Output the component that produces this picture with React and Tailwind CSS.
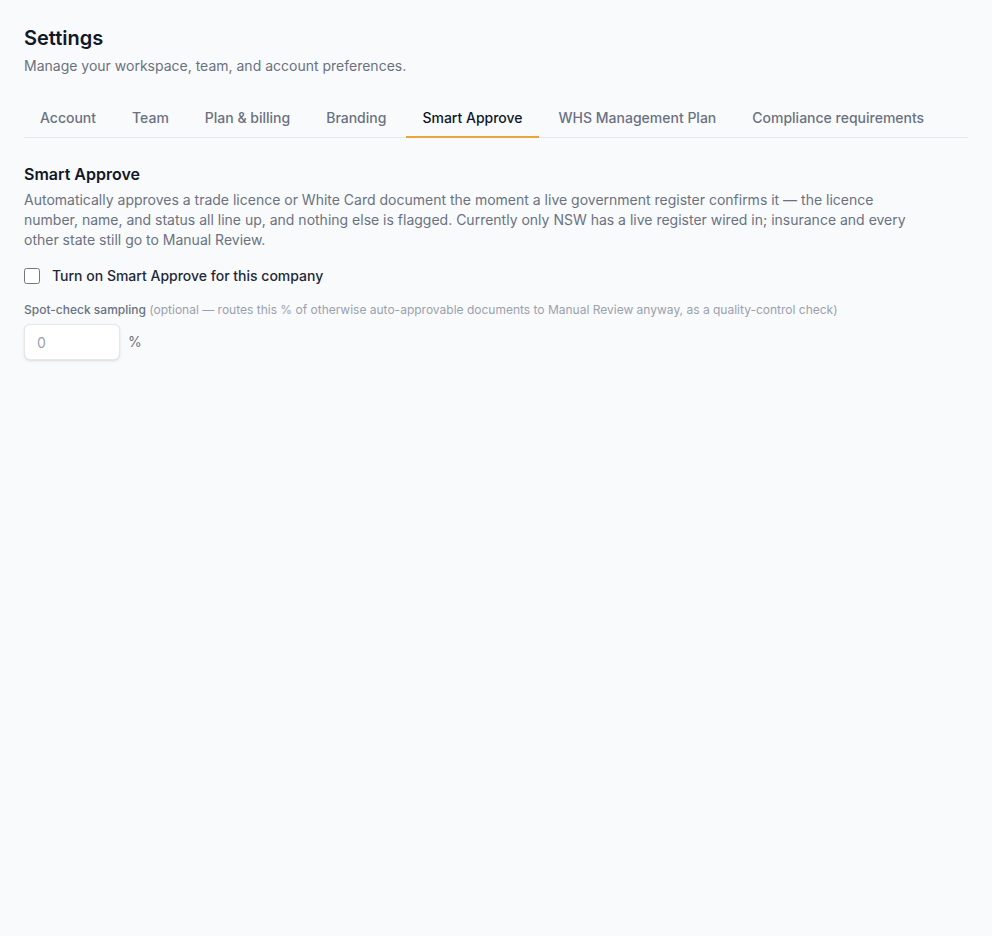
import React, { useState } from 'react'

const tabs = ['Account', 'Team', 'Plan & billing', 'Branding', 'Smart Approve', 'WHS Management Plan', 'Compliance requirements']

const App = () => {
    const [active, setActive] = useState('Smart Approve')
    const [enabled, setEnabled] = useState(false)

    return (
        <div className="min-h-screen bg-gray-50 px-6 pt-6 font-['Inter',sans-serif] text-gray-900">
            <h1 className="text-xl font-semibold leading-7">Settings</h1>
            <p className="mt-1 text-sm text-gray-500">Manage your workspace, team, and account preferences.</p>

            <div className="mt-6 flex gap-1 border-b border-gray-200">
                {tabs.map((t) => (
                    <button
                        key={t}
                        onClick={() => setActive(t)}
                        className={
                            t === active
                                ? '-mb-px border-b-2 border-[#eaa53e] px-4 py-2 text-sm font-medium text-gray-900'
                                : '-mb-px border-b-2 border-transparent px-4 py-2 text-sm font-medium text-gray-500 hover:text-gray-700'
                        }
                    >
                        {t}
                    </button>
                ))}
            </div>

            <div className="mt-6">
                <h2 className="text-base font-semibold leading-6">Smart Approve</h2>
                <p className="mt-1 max-w-4xl text-sm leading-5 text-gray-500">
                    Automatically approves a trade licence or White Card document the moment a live government register confirms it — the licence number, name, and status all line up, and nothing else is flagged. Currently only NSW has a live register wired in; insurance and every other state still go to Manual Review.
                </p>

                <label className="mt-4 flex items-center gap-3 text-sm font-medium leading-5 text-gray-800">
                    <input
                        type="checkbox"
                        checked={enabled}
                        onChange={() => setEnabled(!enabled)}
                        className="h-4 w-4 rounded border border-gray-400"
                    />
                    Turn on Smart Approve for this company
                </label>

                <p className="mt-4 text-xs leading-4 text-gray-400">
                    <span className="font-medium text-gray-500">Spot-check sampling</span> (optional — routes this % of otherwise auto-approvable documents to Manual Review anyway, as a quality-control check)
                </p>
                <div className="mt-1.5 flex items-center gap-2">
                    <input
                        type="number"
                        placeholder="0"
                        className="h-9 w-24 rounded-md border border-gray-200 bg-white px-3 text-sm shadow-sm placeholder:text-gray-400"
                    />
                    <span className="text-sm text-gray-500">%</span>
                </div>
            </div>
        </div>
    )
}

export default App
